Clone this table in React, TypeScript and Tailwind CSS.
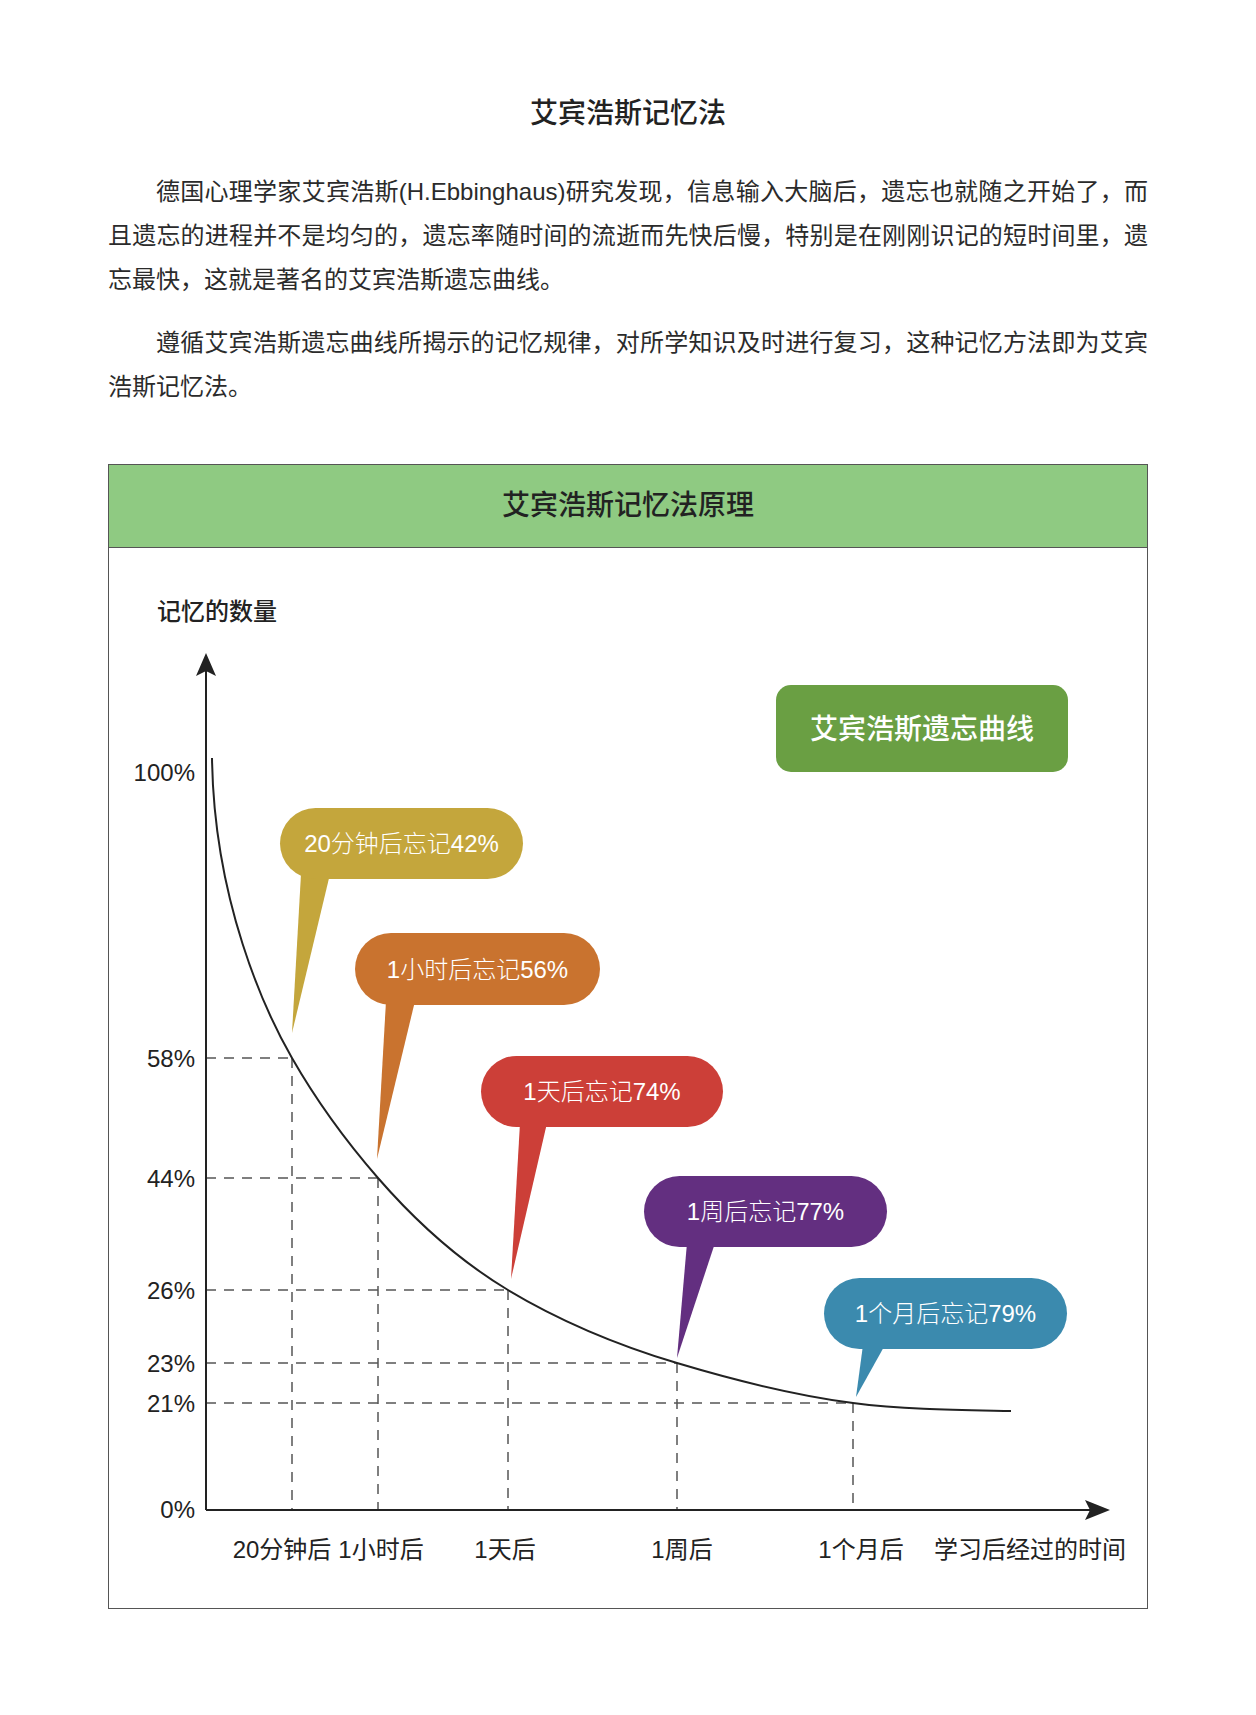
// forgetting curve, hand-fitted through the points read off the reference
const CURVE =
  'M212,757 C214,900 265,1010 292,1057 C320.7,1107.2 349.3,1144 378,1177 ' +
  'C421.3,1226.8 464.7,1263 508,1289 C564.3,1322.8 620.7,1345.1 677,1362 ' +
  'C735.7,1379.6 794.3,1394.4 853,1402 C905.7,1408.8 958.3,1409 1011,1410';

const AXIS_X = 206;
const AXIS_Y = 1509;

const ticks = [
  { label: '100%', y: 771 },
  { label: '58%', y: 1057, to: 292 },
  { label: '44%', y: 1177, to: 378 },
  { label: '26%', y: 1289, to: 508 },
  { label: '23%', y: 1362, to: 677 },
  { label: '21%', y: 1402, to: 853 },
  { label: '0%', y: 1508 },
];

const xLabels = [
  { label: '20分钟后', x: 282 },
  { label: '1小时后', x: 381 },
  { label: '1天后', x: 505 },
  { label: '1周后', x: 682 },
  { label: '1个月后', x: 861 },
  { label: '学习后经过的时间', x: 1030 },
];

const bubbles = [
  { text: '20分钟后忘记42%', color: '#c4a63c', x1: 280, x2: 523, y1: 807, y2: 878, tail: [[301, 873], [330, 873], [292, 1032]] },
  { text: '1小时后忘记56%', color: '#c9732f', x1: 355, x2: 600, y1: 932, y2: 1004, tail: [[386, 1000], [415, 1000], [377, 1158]] },
  { text: '1天后忘记74%', color: '#cc3f38', x1: 481, x2: 723, y1: 1055, y2: 1126, tail: [[520, 1122], [547, 1122], [511, 1278]] },
  { text: '1周后忘记77%', color: '#632f80', x1: 644, x2: 887, y1: 1175, y2: 1246, tail: [[687, 1242], [715, 1242], [677, 1357]] },
  { text: '1个月后忘记79%', color: '#3b8aae', x1: 824, x2: 1067, y1: 1277, y2: 1348, tail: [[863, 1344], [885, 1344], [856, 1396]] },
];

function Chart() {
  return (
    <svg width={1038} height={1060} viewBox="109 547 1038 1060" className="block">
      <text x={157} y={610} dominantBaseline="central" fill="#222" className="text-[24px] font-medium">
        记忆的数量
      </text>

      {/* dashed guides */}
      {ticks.filter((t) => t.to).map((t) => (
        <g key={t.label} stroke="#555" strokeWidth={1.5} strokeDasharray="10 8" fill="none">
          <line x1={AXIS_X} y1={t.y} x2={t.to} y2={t.y} />
          <line x1={t.to} y1={t.y} x2={t.to} y2={AXIS_Y} />
        </g>
      ))}

      {/* axes */}
      <line x1={AXIS_X} y1={AXIS_Y} x2={AXIS_X} y2={668} stroke="#222" strokeWidth={2} />
      <path d="M206,652 L216,675 L206,670 L196,675 Z" fill="#222" />
      <line x1={AXIS_X} y1={AXIS_Y} x2={1092} y2={AXIS_Y} stroke="#222" strokeWidth={2} />
      <path d="M1110,1509 L1085,1499 L1090,1509 L1085,1519 Z" fill="#222" />

      {ticks.map((t) => (
        <text key={t.label} x={195} y={t.y} textAnchor="end" dominantBaseline="central" fill="#222" className="text-[24px]">
          {t.label}
        </text>
      ))}

      {xLabels.map((l) => (
        <text key={l.label} x={l.x} y={1548} textAnchor="middle" dominantBaseline="central" fill="#222" className="text-[24px]">
          {l.label}
        </text>
      ))}

      <path d={CURVE} fill="none" stroke="#222" strokeWidth={2} />

      {bubbles.map((b) => (
        <g key={b.text}>
          <polygon points={b.tail.map((p) => p.join(',')).join(' ')} fill={b.color} />
          <rect x={b.x1} y={b.y1} width={b.x2 - b.x1} height={b.y2 - b.y1} rx={(b.y2 - b.y1) / 2} fill={b.color} />
          <text
            x={(b.x1 + b.x2) / 2}
            y={(b.y1 + b.y2) / 2}
            textAnchor="middle"
            dominantBaseline="central"
            fill="#fff"
            className="text-[24px] font-light"
          >
            {b.text}
          </text>
        </g>
      ))}

      <rect x={776} y={684} width={292} height={87} rx={15} fill="#6a9f43" />
      <text x={922} y={728} textAnchor="middle" dominantBaseline="central" fill="#fff" className="text-[28px] font-medium">
        艾宾浩斯遗忘曲线
      </text>
    </svg>
  );
}

export default function App() {
  return (
    <div className="min-h-screen bg-white font-['Liberation_Sans','Noto_Sans_CJK_SC',sans-serif] text-[#2b2b2b]">
      <div className="mx-auto w-[1040px] pt-[94px] pb-[108px]">
        <h1 className="text-center text-[28px] leading-[40px] font-medium text-[#222]">艾宾浩斯记忆法</h1>

        <div className="mt-[36px] text-justify text-[24px] leading-[44px]">
          <p className="indent-[2em]">
            德国心理学家艾宾浩斯(H.Ebbinghaus)研究发现，信息输入大脑后，遗忘也就随之开始了，而且遗忘的进程并不是均匀的，遗忘率随时间的流逝而先快后慢，特别是在刚刚识记的短时间里，遗忘最快，这就是著名的艾宾浩斯遗忘曲线。
          </p>
          <p className="mt-[19px] indent-[2em]">
            遵循艾宾浩斯遗忘曲线所揭示的记忆规律，对所学知识及时进行复习，这种记忆方法即为艾宾浩斯记忆法。
          </p>
        </div>

        <div className="mt-[55px] border border-[#555]">
          <div className="flex h-[83px] items-center justify-center border-b border-[#555] bg-[#8fca82] text-[28px] font-medium text-[#222]">
            艾宾浩斯记忆法原理
          </div>
          <Chart />
        </div>
      </div>
    </div>
  );
}
